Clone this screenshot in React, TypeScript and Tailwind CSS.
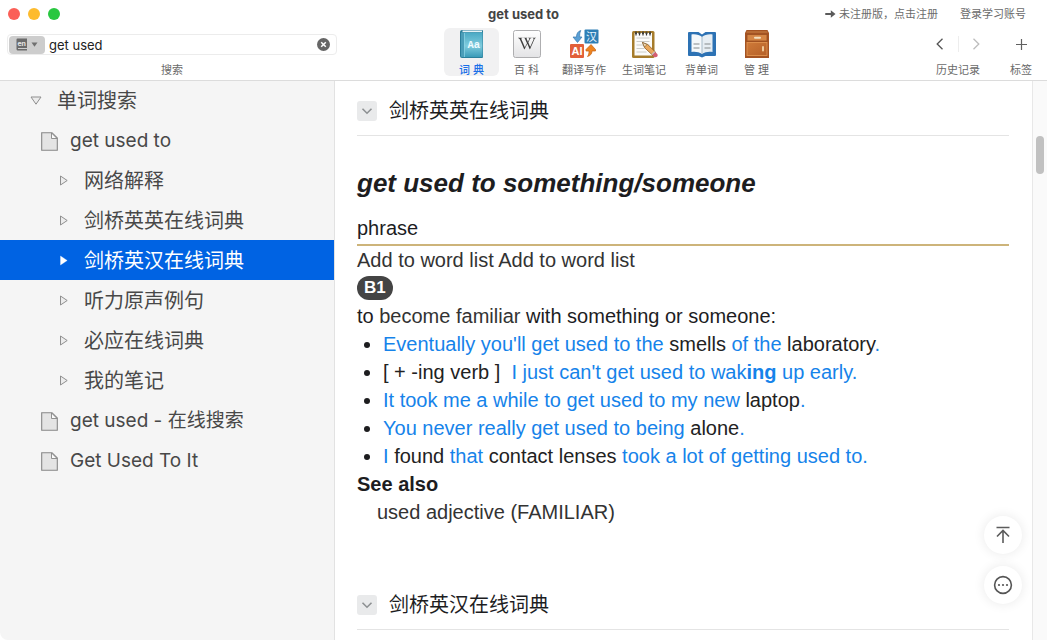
import React from "react";
import { FaWikipediaW } from "react-icons/fa";

const BookIcon = () => (
  <svg width="28" height="30" viewBox="0 0 28 30" aria-hidden="true">
    <defs>
      <linearGradient id="bookCover" x1="0" y1="0" x2="0" y2="1">
        <stop offset="0" stopColor="#4aa9c4" />
        <stop offset="0.55" stopColor="#7fcbdd" />
        <stop offset="1" stopColor="#3b9bb8" />
      </linearGradient>
    </defs>
    <path d="M4 1h20a1 1 0 0 1 1 1v26a1 1 0 0 1-1 1H4a2 2 0 0 1-2-2V3a2 2 0 0 1 2-2z" fill="#2b7f9b" />
    <path d="M4.500 1.500H24v1.700H4.500z" fill="#e8f3f6" />
    <path d="M6 3.500h18.500V28H6z" fill="url(#bookCover)" />
    <path d="M3 3.500h3V28H4a1 1 0 0 1-1-1z" fill="#4b9db8" />
    <path d="M6.500 4v24" stroke="#8fd6e6" strokeWidth="0.700" />
    <text x="15.800" y="19" textAnchor="middle" fontSize="10.500" fontWeight="700" fill="#eefbff" className="font-['Liberation_Mono',monospace]">Aa</text>
  </svg>
);

const WikiIcon = () => (
  <svg width="30" height="30" viewBox="0 0 30 30" aria-hidden="true">
    <defs>
      <linearGradient id="wikiTile" x1="0" y1="0" x2="0" y2="1">
        <stop offset="0" stopColor="#ffffff" />
        <stop offset="1" stopColor="#e3e3e5" />
      </linearGradient>
    </defs>
    <rect x="1.500" y="1.500" width="27" height="27" rx="2" fill="url(#wikiTile)" stroke="#aeaeb0" />
    <FaWikipediaW x="6" y="5.500" size={18} color="#3d3d3d" />
  </svg>
);

const TranslateIcon = () => (
  <svg width="30" height="30" viewBox="0 0 30 30" className="overflow-visible" aria-hidden="true">
    <rect x="15.500" y="0.500" width="14" height="14" rx="1" fill="#2f7fb5" />
    <text x="22.500" y="11.500" textAnchor="middle" fontSize="11" fill="#e8f5ff" className="font-['Noto_Sans_CJK_SC',sans-serif]">汉</text>
    <rect x="1" y="15" width="14" height="14" rx="1" fill="#e2603a" />
    <text x="8" y="26" textAnchor="middle" fontSize="11" fontWeight="700" fill="#ffffff" className="font-['Liberation_Sans',sans-serif]">AI</text>
    <path d="M11.800 1.500C9 2.300 7.500 4.500 7.500 8H4l4.500 5.500 4.500-5.500h-2.200c-.3-2.500 0-4.500 1-6.500z" fill="#5aa0d6" stroke="#3a78ac" strokeWidth="0.700" />
    <path d="M18.500 27.500c2.800-.8 4.500-2.500 4.500-5.500h3.500v-1.500L22 15.500 17 20.500V22h3c0 2.500-.3 4-1.500 5.500z" fill="#ee8420" stroke="#c45f10" strokeWidth="0.700" />
  </svg>
);

const NotepadIcon = () => (
  <svg width="30" height="30" viewBox="0 0 30 30" aria-hidden="true">
    <rect x="3" y="2" width="22.500" height="27" rx="1.500" fill="#a67c2b" />
    <path d="M5.500 4H23v22.500H5.500z" fill="#fbfbfa" />
    <path d="M7.500 9h13M7.500 12.500h13M7.500 16h13M7.500 19.500h8M7.500 23h10" stroke="#c6c6c2" strokeWidth="0.900" />
    <path d="M6 3.800h17" stroke="#4c4638" strokeWidth="2.500" strokeDasharray="2 1.500" />
    <path d="M7 4.500v2M10.500 4.500v2M14 4.500v2M17.500 4.500v2M21 4.500v2" stroke="#333" strokeWidth="1.200" />
    <path d="M13.500 13.500l2.200 5.300 8 7.500 3-3-8-7.800z" fill="#e9a85c" stroke="#8d5a20" strokeWidth="0.800" />
    <path d="M13.500 13.500l2 4.500 2.500-2.500z" fill="#f6dfb8" stroke="#66481f" strokeWidth="0.500" />
    <path d="M23 25.800l3-3 2.500 2.400c.8 1.800-1 3.700-3 3z" fill="#d45d70" />
    <path d="M22.400 25.200l3-3 .9.900-3 3z" fill="#bfc3c7" />
  </svg>
);

const OpenBookIcon = () => (
  <svg width="30" height="30" viewBox="0 0 30 30" aria-hidden="true">
    <path d="M2 3h9.500L15 5.500 18.500 3H28a1 1 0 0 1 1 1v22a1 1 0 0 1-1 1h-9.500L15 28.500 11.500 27H2a1 1 0 0 1-1-1V4a1 1 0 0 1 1-1z" fill="#2d72b4" />
    <path d="M4.500 5.500C9 5 12.500 6 15 8v17c-3-2-6.500-2.500-10.500-2z" fill="#f5f8fa" />
    <path d="M25.500 5.500C21 5 17.500 6 15 8v17c3-2 6.500-2.500 10.500-2z" fill="#e7eef3" />
    <path d="M15 7.500V25" stroke="#a7bac8" />
    <path d="M6.500 15h6M6.500 19h6M17.500 15h6M17.500 19h6" stroke="#85898c" strokeWidth="1.200" />
  </svg>
);

const CabinetIcon = () => (
  <svg width="30" height="30" viewBox="0 0 30 30" aria-hidden="true">
    <defs>
      <linearGradient id="cabinetWood" x1="0" y1="0" x2="1" y2="1">
        <stop offset="0" stopColor="#cf7a38" />
        <stop offset="1" stopColor="#b56029" />
      </linearGradient>
    </defs>
    <path d="M4.500 1h21l1.500 3v25H3V4z" fill="#a45322" />
    <path d="M4.500 2h21v2h-21z" fill="#b86b34" />
    <rect x="5" y="5.500" width="20" height="6.500" fill="#d58645" stroke="#9c4f20" strokeWidth="0.800" />
    <rect x="5" y="13.500" width="20" height="13" fill="url(#cabinetWood)" stroke="#e19350" strokeWidth="0.900" />
    <rect x="12" y="7.800" width="7" height="2" rx="1" fill="#f2dfc0" />
    <rect x="20" y="17" width="2" height="5.500" rx="1" fill="#f0c998" />
  </svg>
);

const tools = [
  { label: "词 典", Icon: BookIcon, active: true },
  { label: "百 科", Icon: WikiIcon },
  { label: "翻译写作", Icon: TranslateIcon },
  { label: "生词笔记", Icon: NotepadIcon },
  { label: "背单词", Icon: OpenBookIcon },
  { label: "管 理", Icon: CabinetIcon },
];

const FileIcon = () => (
  <svg width="17" height="19" viewBox="0 0 17 19" aria-hidden="true">
    <path d="M0.700 0.700H11L16.300 6v12.300H0.700z" fill="#e4e4e4" stroke="#868686" strokeWidth="1.100" />
    <path d="M10.500 1v5.500H16z" fill="#fafafa" stroke="#868686" strokeWidth="0.900" />
  </svg>
);

const Triangle = ({ down, selected }: { down?: boolean; selected?: boolean }) => (
  <svg width="12" height="12" viewBox="0 0 12 12" aria-hidden="true">
    <path
      d={down ? "M1 2h10L6 9.200z" : "M2.500 1v9l6.700-4.500z"}
      fill={selected ? "#fff" : "#ececec"}
      stroke={selected ? "#fff" : "#8f8f8f"}
      strokeLinejoin="round"
      strokeWidth={selected ? "0.300" : "1"}
    />
  </svg>
);

type Row = { text: string; kind: "root" | "file" | "leaf"; selected?: boolean };

const rows: Row[] = [
  { text: "单词搜索", kind: "root" },
  { text: "get used to", kind: "file" },
  { text: "网络解释", kind: "leaf" },
  { text: "剑桥英英在线词典", kind: "leaf" },
  { text: "剑桥英汉在线词典", kind: "leaf", selected: true },
  { text: "听力原声例句", kind: "leaf" },
  { text: "必应在线词典", kind: "leaf" },
  { text: "我的笔记", kind: "leaf" },
  { text: "get used - 在线搜索", kind: "file" },
  { text: "Get Used To It", kind: "file" },
];

const rowLayout = {
  root: "pl-[30px] gap-[15px] text-[20px]",
  file: "pl-[41px] gap-3 text-[19px]",
  leaf: "pl-[58px] gap-[14px] text-[20px]",
};

const SectionHead = ({ title }: { title: string }) => (
  <header className="flex items-center gap-3 border-b border-[#e4e4e4] pb-[9px]">
    <button aria-label={`收起 ${title}`} className="flex size-5 items-center justify-center rounded-[3px] bg-[#e9eaeb]">
      <svg width="12" height="12" viewBox="0 0 12 12" fill="none" aria-hidden="true">
        <path d="M1.500 3.800L6 8.200l4.500-4.400" stroke="#8d9092" strokeWidth="1.600" />
      </svg>
    </button>
    <h2 className="text-[20px] leading-[30px]">{title}</h2>
  </header>
);

const Plain = ({ children }: { children: React.ReactNode }) => <span className="text-[#222]">{children}</span>;

export default function App() {
  return (
    <div className="flex h-screen flex-col overflow-hidden bg-white font-['Inter','Noto_Sans_CJK_SC',sans-serif] text-[#4a4a4a]">
      <header className="relative z-10 h-20 shrink-0 bg-white shadow-[0_1px_0_#dcdcdc]">
        <div className="grid h-7 grid-cols-[1fr_auto_1fr] items-center px-2">
          <div className="flex gap-2">
            <button aria-label="关闭" className="size-3 rounded-full bg-[#fb5f57]" />
            <button aria-label="最小化" className="size-3 rounded-full bg-[#fdbb2e]" />
            <button aria-label="缩放" className="size-3 rounded-full bg-[#29c740]" />
          </div>
          <h1 className="text-[13px] leading-5 font-bold text-[#444]">get used to</h1>
          <div className="flex justify-end gap-[22px] pr-[13px] text-[11px] leading-4 text-[#6b6b6b]">
            <a href="#register" className="flex items-center gap-[3px]">
              <svg width="11" height="10" viewBox="0 0 11 10" fill="none" aria-hidden="true">
                <path d="M1 5h6" stroke="#5a5a5a" strokeWidth="2" strokeLinecap="round" />
                <path d="M5.800 1.200L10.500 5 5.800 8.800z" fill="#5a5a5a" />
              </svg>
              未注册版，点击注册
            </a>
            <a href="#login">登录学习账号</a>
          </div>
        </div>

        <div className="flex h-12 items-start pr-[15px] pl-[7px] text-[11px] leading-4">
          <div className="flex w-[330px] flex-col items-center pt-[6px] text-[#6b6b6b]">
            <div className="flex h-[21px] w-full items-center rounded-[4px] border border-[#ececec] pr-[6px] pl-px">
              <button aria-label="搜索语言" className="flex h-[18px] w-9 items-center justify-center gap-1 rounded-[4px] bg-[#cdcdcd]">
                <svg width="11" height="13" viewBox="0 0 11 13" className="overflow-visible" aria-hidden="true">
                  <path d="M1.500 0.500H11v9.500H2v1h9v1.500H1.500A1.500 1.500 0 0 1 .5 11V1.500a1 1 0 0 1 1-1z" fill="#6b6b6b" />
                  <text x="5.700" y="7.800" textAnchor="middle" fontSize="7" fontWeight="700" fill="#e4e4e4">en</text>
                </svg>
                <svg width="7" height="5" viewBox="0 0 7 5" aria-hidden="true">
                  <path d="M0.500 0.500h6L3.500 4.800z" fill="#707070" />
                </svg>
              </button>
              <input id="search" defaultValue="get used" className="ml-1 min-w-0 flex-1 bg-transparent text-[13px] leading-4 text-[#222] outline-none" />
              <button aria-label="清除">
                <svg width="13" height="13" viewBox="0 0 13 13" fill="none" aria-hidden="true">
                  <circle cx="6.500" cy="6.500" r="6.500" fill="#666" />
                  <path d="M4.200 4.200l4.600 4.600M8.800 4.200L4.200 8.800" stroke="#fff" strokeWidth="1.500" />
                </svg>
              </button>
            </div>
            <label htmlFor="search" className="mt-[7px]">搜索</label>
          </div>

          <nav className="ml-[107px] flex">
            {tools.map(({ label, Icon, active }) => (
              <button
                key={label}
                className={`flex h-12 min-w-[55px] flex-col items-center gap-[3px] rounded-[6px] px-2 pt-px whitespace-nowrap [&>svg]:shrink-0 ${
                  active ? "bg-[#f1f1f2] font-medium text-[#1a6fe8]" : "text-[#666]"
                }`}
              >
                <Icon />
                {label}
              </button>
            ))}
          </nav>

          <div className="ml-auto flex gap-[30px] text-[#6b6b6b]">
            <div className="flex flex-col items-center gap-[3px] pt-px">
              <div className="flex h-[30px] w-full items-center justify-between">
                <button aria-label="后退">
                  <svg width="8" height="12" viewBox="0 0 8 12" fill="none" aria-hidden="true">
                    <path d="M6.500 0.800L1.200 6l5.300 5.200" stroke="#555" strokeWidth="1.300" />
                  </svg>
                </button>
                <span className="h-4 w-px bg-[#ededed]" />
                <button aria-label="前进">
                  <svg width="8" height="12" viewBox="0 0 8 12" fill="none" aria-hidden="true">
                    <path d="M1.500 0.800L6.800 6l-5.300 5.200" stroke="#bdbdbd" strokeWidth="1.300" />
                  </svg>
                </button>
              </div>
              <span>历史记录</span>
            </div>
            <button className="flex flex-col items-center gap-[3px] pt-px">
              <span className="flex h-[30px] items-center">
                <svg width="11" height="11" viewBox="0 0 11 11" fill="none" aria-hidden="true">
                  <path d="M5.500 0v11M0 5.500h11" stroke="#606060" strokeWidth="1.200" />
                </svg>
              </span>
              标签
            </button>
          </div>
        </div>
      </header>

      <div className="flex min-h-0 flex-1">
        <aside className="w-[335px] shrink-0 rounded-bl-[8px] border-r border-[#e2e2e2] bg-[#f5f5f5]">
          <ul>
            {rows.map((row) => (
              <li key={row.text}>
                <button
                  className={`flex h-10 w-full items-center pt-0.5 text-left leading-7 ${rowLayout[row.kind]} ${
                    row.selected ? "bg-[#0063e3] text-white" : "text-[#484848]"
                  }`}
                >
                  {row.kind === "file" ? <FileIcon /> : <Triangle down={row.kind === "root"} selected={row.selected} />}
                  {row.text}
                </button>
              </li>
            ))}
          </ul>
        </aside>

        <main className="relative min-w-0 flex-1 overflow-hidden pt-4 pr-[23px] pl-[22px] font-['Liberation_Sans','Noto_Sans_CJK_SC',sans-serif] text-[20px] leading-7 text-[#1d1d1f]">
          <section>
            <SectionHead title="剑桥英英在线词典" />
            <h3 className="mt-8 text-[26px] leading-[30px] font-bold italic">get used to something/someone</h3>
            <p className="mt-4 border-b-2 border-[#cdb47a] pb-[2px]">phrase</p>
            <p className="text-[#333]">Add to word list Add to word list</p>
            <p className="flex h-7 items-center">
              <span className="rounded-full bg-[#444] px-[7px] text-[17px] leading-6 font-bold text-white">B1</span>
            </p>
            <p>
              to <span className="text-[#333]">become familiar</span> with something or someone:
            </p>
            <ul className="list-disc pl-[26px] text-[#1683ea] marker:text-[#1d1d1f]">
              <li>Eventually you'll get used to the <Plain>smells</Plain> of the <Plain>laboratory</Plain>.</li>
              <li><Plain>[ + -ing verb ]</Plain>&nbsp; I just can't get used to wak<b>ing</b> up early.</li>
              <li>It took me a while to get used to my new <Plain>laptop</Plain>.</li>
              <li>You never really get used to being <Plain>alone</Plain>.</li>
              <li>I <Plain>found</Plain> that <Plain>contact lenses</Plain> took a lot of getting used to.</li>
            </ul>
            <p className="font-bold">See also</p>
            <p className="pl-5 text-[#333]">used adjective (FAMILIAR)</p>
          </section>
          <section className="mt-16">
            <SectionHead title="剑桥英汉在线词典" />
          </section>

          <div className="absolute right-[10px] bottom-9 flex flex-col gap-3">
            <button aria-label="回到顶部" className="flex size-[38px] items-center justify-center rounded-full bg-white shadow-[0_0_12px_rgba(0,0,0,0.09)]">
              <svg width="18" height="18" viewBox="0 0 18 18" fill="none" aria-hidden="true">
                <path d="M2.500 1.500h13M9 17V4.800M3 10.500l6-6 6 6" stroke="#5c5c5c" strokeWidth="1.600" />
              </svg>
            </button>
            <button aria-label="更多" className="flex size-[38px] items-center justify-center rounded-full bg-white shadow-[0_0_12px_rgba(0,0,0,0.09)]">
              <svg width="20" height="20" viewBox="0 0 20 20" fill="none" aria-hidden="true">
                <circle cx="10" cy="10" r="8.400" stroke="#555" strokeWidth="1.600" />
                <g fill="#555">
                  <circle cx="6" cy="10" r="1.100" />
                  <circle cx="10" cy="10" r="1.100" />
                  <circle cx="14" cy="10" r="1.100" />
                </g>
              </svg>
            </button>
          </div>
        </main>

        <div className="flex w-[15px] shrink-0 justify-center border-l border-[#e8e8e8] bg-[#fafafa] pt-14">
          <div className="h-[38px] w-2 rounded-full bg-[#c1c1c1]" />
        </div>
      </div>
    </div>
  );
}
